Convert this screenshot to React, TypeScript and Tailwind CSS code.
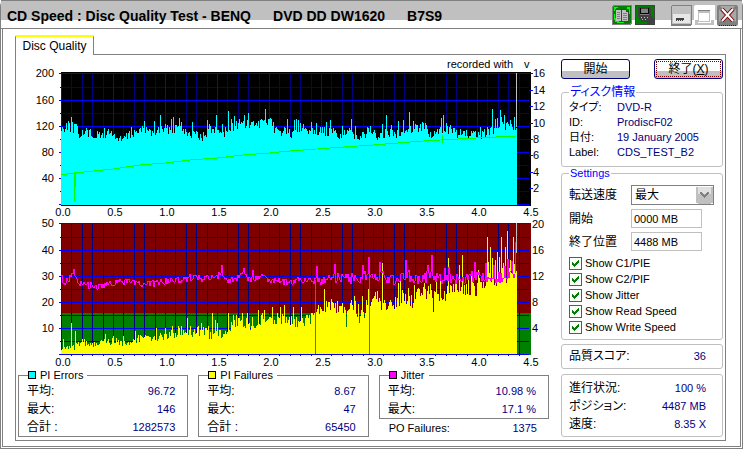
import type { ReactNode } from 'react';

type Point = [number, number];

const PLOT_LEFT = 61;
const PLOT_RIGHT = 531;
const DATA_END = 517;
const HALF_GB = 52;

// outline of the PI error bars
const pieBase: Point[] = [
  [61, 130], [66, 126], [76, 129], [79, 134], [90, 134], [100, 136], [112, 133], [119, 141], [124, 138],
  [135, 132], [145, 130], [152, 133], [160, 129], [172, 129], [180, 126], [188, 133], [201, 137], [210, 130],
  [222, 133], [232, 127], [240, 126], [262, 124], [270, 123], [277, 132], [285, 130], [292, 136], [300, 127],
  [318, 131], [334, 133], [340, 135], [350, 133], [362, 136], [370, 129], [377, 138], [386, 132], [394, 134],
  [402, 130], [424, 126], [431, 137], [444, 128], [455, 133], [477, 136], [490, 131], [500, 125], [517, 126],
];
const piePeaks: Point[] = [
  [66, 123], [68, 121], [71, 117], [72, 122], [75, 124], [86, 128], [104, 128], [108, 129], [131, 127], [144, 121],
  [146, 127], [154, 121], [160, 115], [167, 125], [171, 119], [173, 117], [179, 118], [181, 122], [192, 122],
  [202, 141], [207, 120], [209, 124], [216, 115], [222, 124], [228, 111], [231, 119], [234, 116], [236, 121],
  [239, 119], [244, 115], [248, 113], [253, 121], [261, 119], [265, 109], [269, 119], [271, 119], [287, 119],
  [294, 120], [296, 119], [298, 120], [300, 123], [311, 122], [316, 123], [326, 122], [330, 120], [338, 138],
  [342, 126], [351, 119], [355, 126], [370, 126], [382, 124], [386, 115], [391, 125], [398, 121], [403, 120],
  [409, 112], [413, 121], [416, 125], [422, 122], [441, 118], [443, 115], [446, 123], [450, 125], [476, 138],
  [480, 127], [488, 129], [492, 109], [495, 119], [497, 118], [500, 110], [501, 117], [504, 115], [510, 120],
  [514, 117],
];

// outline of the PI failure bars
const pifBase: Point[] = [
  [61, 347], [75, 347], [82, 342], [90, 346], [100, 343], [112, 341], [125, 343], [138, 338], [155, 338],
  [162, 337], [175, 333], [185, 329], [192, 333], [203, 330], [210, 335], [225, 334], [232, 324], [240, 321],
  [252, 325], [262, 319], [275, 320], [285, 318], [296, 323], [312, 318], [320, 307], [330, 304], [342, 309],
  [354, 306], [362, 315], [368, 302], [380, 303], [392, 308], [402, 296], [412, 301], [422, 293], [433, 295],
  [443, 293], [452, 290], [466, 287], [476, 287], [486, 283], [498, 278], [508, 275], [517, 270],
];
const pifPeaks: Point[] = [
  [63, 339], [71, 323], [75, 331], [84, 339], [105, 334], [113, 336], [123, 336], [135, 331], [140, 335],
  [156, 328], [165, 328], [172, 326], [178, 326], [181, 326], [187, 318], [190, 326], [198, 326], [201, 323],
  [208, 326], [212, 313], [215, 320], [217, 323], [228, 313], [233, 315], [236, 315], [242, 313], [247, 313],
  [252, 317], [258, 310], [262, 313], [264, 310], [269, 317], [272, 307], [280, 307], [284, 305], [293, 307],
  [295, 327], [297, 327], [301, 307], [306, 315], [318, 305], [324, 289], [328, 302], [337, 301], [342, 303],
  [346, 327], [352, 305], [354, 296], [359, 323], [362, 296], [368, 289], [375, 292], [377, 291], [382, 263],
  [389, 302], [398, 283], [400, 281], [408, 288], [414, 285], [418, 288], [424, 283], [430, 284], [433, 312],
  [436, 278], [440, 277], [448, 258], [455, 283], [459, 265], [462, 255], [471, 275], [478, 270], [487, 237],
  [488, 262], [490, 247], [492, 258], [495, 260], [497, 252], [499, 257], [501, 237], [503, 263], [505, 247],
  [507, 231], [510, 260], [513, 237], [515, 255],
];

const jitterBase: Point[] = [
  [61, 273], [64, 284], [70, 278], [73, 272], [77, 281], [90, 286], [103, 285], [115, 282], [125, 282],
  [140, 284], [150, 284], [162, 282], [172, 280], [185, 280], [194, 276], [203, 280], [212, 276], [221, 275],
  [228, 280], [234, 280], [242, 275], [252, 280], [260, 276], [270, 280], [286, 282], [300, 279], [316, 281],
  [332, 276], [345, 280], [362, 277], [370, 276], [382, 276], [395, 279], [408, 275], [420, 281], [430, 275],
  [440, 278], [462, 279], [478, 275], [495, 278], [508, 275], [515, 275],
];
const jitterPeaks: Point[] = [
  [74, 269], [222, 265], [244, 268], [253, 270], [317, 266], [335, 264], [363, 265], [369, 257], [380, 262],
  [406, 260], [428, 265], [432, 255], [445, 268], [449, 267], [475, 262], [486, 263], [494, 265], [505, 266],
  [508, 259], [512, 261], [516, 242],
];

const readSpeed =
  '61,175 74,173 113,169 140,165 165,163 190,160 217,158 243,155 269,153 290,151 330,148 373,145 423,141 476,138 516,136';

function interpolate(points: Point[], x: number) {
  const next = points.findIndex(([px]) => px >= x);
  if (next < 1) return next === 0 ? points[0][1] : points[points.length - 1][1];
  const [x0, y0] = points[next - 1];
  const [x1, y1] = points[next];
  return y0 + ((y1 - y0) * (x - x0)) / (x1 - x0);
}

function samples(base: Point[], peaks: Point[], spread: (x: number) => number, seed: number): Point[] {
  const fixed = new Map(peaks);
  let state = seed;
  const result: Point[] = [];
  for (let x = PLOT_LEFT; x < DATA_END; x++) {
    state = (state * 1103515245 + 12345) % 2147483648;
    const noise = (state / 2147483648 - 0.5) * spread(x);
    result.push([x, fixed.get(x) ?? Math.round(interpolate(base, x) + noise)]);
  }
  return result;
}

function bars(points: Point[], bottom: number) {
  return points.map(([x, y]) => `M${x} ${y}h1V${bottom}h-1z`).join('');
}

const pieBars = bars(samples(pieBase, piePeaks, () => 10, 7), 205);
const pifBars = bars(samples(pifBase, pifPeaks, (x) => 6 + (x - 61) / 34, 31), 354);
const jitterLine = samples(jitterBase, jitterPeaks, (x) => (x > 320 ? 12 : 7), 99)
  .map(([x, y]) => `${x},${y}`)
  .join(' ');

const minorColumns = Array.from({ length: 46 }, (_, i) => i).filter((i) => i % 5 !== 0);
const majorColumns = Array.from({ length: 10 }, (_, i) => i);

function Grid({ top, bottom, major, minor }: { top: number; bottom: number; major: number[]; minor: number[] }) {
  return (
    <g>
      {minorColumns.map((i) => (
        <rect key={i} x={Math.round(PLOT_LEFT + i * 10.4)} y={top} width="1" height={bottom - top} fill="#000080" />
      ))}
      {minor.map((y) => (
        <rect key={y} x="60" y={y} width="469" height="1" fill="#000080" />
      ))}
      {majorColumns.slice(0, 9).map((i) => (
        <rect key={i} x={PLOT_LEFT + i * HALF_GB} y={top} width="1" height={bottom - top} fill="#0000ff" />
      ))}
      {major.map((y) => (
        <rect key={y} x="59" y={y} width="470" height="1" fill="#0000ff" />
      ))}
    </g>
  );
}

function XLabels({ y }: { y: number }) {
  return (
    <g textAnchor="middle">
      {majorColumns.map((i) => (
        <text key={i} x={63 + i * HALF_GB} y={y}>
          {(i / 2).toFixed(1)}
        </text>
      ))}
    </g>
  );
}

function YLabels({ x, rows, anchor }: { x: number; rows: [string, number][]; anchor: 'start' | 'end' }) {
  return (
    <g textAnchor={anchor}>
      {rows.map(([label, y]) => (
        <text key={label} x={x} y={y + 4}>
          {label}
        </text>
      ))}
    </g>
  );
}

function Charts() {
  const errorRows = [73, 100, 126, 152, 178, 204];
  const failureRows = [223, 250, 276, 302, 328, 354];
  const speedRows: [string, number][] = [
    ['16', 73], ['14', 90], ['12', 106], ['10', 123], ['8', 139], ['6', 155], ['4', 172], ['2', 188],
  ];
  return (
    <svg viewBox="18 55 531 313" className="block w-full overflow-visible text-[11px]" shapeRendering="crispEdges">
      <text x="447" y="68">recorded with</text>
      <text x="524" y="68">v</text>

      <rect x={PLOT_LEFT} y="72" width={PLOT_RIGHT - PLOT_LEFT} height="134" fill="#000" />
      <Grid top={73} bottom={205} major={errorRows} minor={[87, 113, 139, 165, 191]} />
      <path d={pieBars} fill="#00ffff" />
      <rect x="516" y="73" width="1" height="54" fill="#c0c0c0" />
      <polyline points={readSpeed} fill="none" stroke="#00ff00" strokeWidth="1" />
      <path d="M74 173h1v28h-1zM75 173h1v14h-1zM442 135h1v8h-1zM489 135h1v4h-1z" fill="#00ff00" />
      {speedRows.map(([label, y]) => (
        <rect key={label} x="529" y={y} width="4" height="1" fill="#0000ff" />
      ))}
      <YLabels x={54} anchor="end" rows={[['200', 73], ['160', 100], ['120', 126], ['80', 152], ['40', 178]]} />
      <YLabels x={533} anchor="start" rows={speedRows} />
      <XLabels y={216} />

      <rect x={PLOT_LEFT} y="223" width={PLOT_RIGHT - PLOT_LEFT} height="90" fill="#800000" />
      <rect x={PLOT_LEFT} y="313" width={PLOT_RIGHT - PLOT_LEFT} height="42" fill="#008000" />
      <Grid top={223} bottom={355} major={failureRows} minor={[237, 263, 289, 315, 341]} />
      <path d={pifBars} fill="#ffff00" />
      <path d="M315 280h1v74h-1zM369 257h1v97h-1z" fill="#ff00ff" />
      <polyline points={jitterLine} fill="none" stroke="#ff00ff" strokeWidth="1" />
      <rect x="516" y="223" width="1" height="30" fill="#c0c0c0" />
      {minorColumns.slice(0, 36).map((i) => (
        <rect key={i} x={Math.round(PLOT_LEFT + i * 10.4)} y="355" width="1" height="1" fill="#000" />
      ))}
      <YLabels x={54} anchor="end" rows={[['50', 223], ['40', 250], ['30', 276], ['20', 302], ['10', 328]]} />
      <YLabels x={532} anchor="start" rows={[['20', 224], ['16', 250], ['12', 276], ['8', 302], ['4', 328]]} />
      <XLabels y={366} />
    </svg>
  );
}

function StatBox({ title, swatch, children }: { title: string; swatch: ReactNode; children: ReactNode }) {
  return (
    <fieldset className="min-w-0 border border-[#808080] pr-3 pl-2">
      <legend className="ml-px flex items-center gap-1 pr-1 leading-[14px]">
        {swatch}
        {title}
      </legend>
      {children}
    </fieldset>
  );
}

function StatRow({ label, value }: { label: string; value: string }) {
  return (
    <div className="flex h-[18px] items-center justify-between leading-[18px]">
      <span className="text-[12px]">{label}</span>
      <span className="text-[#000080]">{value}</span>
    </div>
  );
}

function InfoRow({ label, value }: { label: string; value: string }) {
  return (
    <div className="flex h-[15px] leading-[15px]">
      <span className="w-12">{label}</span>
      <span className="text-[#000080]">{value}</span>
    </div>
  );
}

function CheckRow({ label }: { label: string }) {
  return (
    <label className="flex h-4 items-center gap-[3px]">
      <span className="grid size-[13px] shrink-0">
        <input
          type="checkbox"
          defaultChecked
          className="peer col-start-1 row-start-1 size-[13px] appearance-none border border-[#008080] bg-white"
        />
        <svg
          viewBox="0 0 13 13"
          className="pointer-events-none invisible col-start-1 row-start-1 peer-checked:visible"
          shapeRendering="crispEdges"
        >
          <path
            d="M3 5h1v3h-1zM4 6h1v3h-1zM5 7h1v3h-1zM6 6h1v3h-1zM7 5h1v3h-1zM8 4h1v3h-1zM9 3h1v3h-1z"
            fill="#008000"
          />
        </svg>
      </span>
      {label}
    </label>
  );
}

function TitleBar() {
  return (
    <header className="flex h-[29px] items-start justify-between border-b border-[#808080] bg-[linear-gradient(#808080_0_1px,#c0c0c0_1px_20px,#fff_20px)] pr-1 pl-[6px]">
      <h1 className="flex gap-[22px] pt-[6px] text-[14px] leading-5 font-bold whitespace-nowrap">
        <span>CD Speed : Disc Quality Test - BENQ</span>
        <span>DVD DD DW1620</span>
        <span>B7S9</span>
      </h1>
      <div className="flex pt-[5px]">
        <button type="button" aria-label="Copy" className="mr-[3px] size-5">
          <svg viewBox="0 0 20 20" shapeRendering="crispEdges">
            <rect width="20" height="20" rx="2" fill="#808080" />
            <rect x="1" y="1" width="18" height="18" rx="2" fill="#008000" />
            <path d="M2 2h4v1h-2v1h-1v2h-1zM2 9h1v4h1v2h2v1h1v1h5v1h-7v-1h-2v-2h-1zM15 2h3v7h-1v-5h-2z" fill="#00ff00" />
            <path d="M4 5h6v11h-6z" fill="#c0c0c0" />
            <path d="M9 4h5v2h3v11h-8z" fill="#404040" />
            <path d="M10 5h4v2h2v9h-6z" fill="#c0c0c0" />
            <path d="M5 7h3v1h-3zM5 9h3v1h-3zM5 11h3v1h-3zM5 13h3v1h-3zM11 8h4v1h-4zM11 10h4v1h-4zM11 12h4v1h-4zM11 14h4v1h-4z" fill="#808080" />
          </svg>
        </button>
        <button type="button" aria-label="Save" className="mr-4 size-5">
          <svg viewBox="0 0 20 20" shapeRendering="crispEdges">
            <rect width="20" height="20" rx="1" fill="#404040" />
            <path d="M1 1h18v18h-18z" fill="#008000" />
            <path d="M3 2h13v9l3 3v3l-3 2h-4v-2h-6v-2h-2v-3h-1z" fill="#404040" />
            <path d="M5 4h9v6h-9z" fill="#808080" />
            <path d="M5 3h1v5h7v-5h1v6h-9z" fill="#000" />
            <path d="M6 12h1v1h-1zM9 12h1v1h-1zM12 12h1v1h-1zM7 14h1v1h-1zM10 14h1v1h-1z" fill="#c0c0c0" />
          </svg>
        </button>
        <button type="button" aria-label="Minimize" className="mr-[2px] size-[21px]">
          <svg viewBox="0 0 21 21" shapeRendering="crispEdges">
            <rect width="21" height="21" rx="2" fill="#808080" />
            <path d="M1 1h19v18h-19z" fill="#c0c0c0" />
            <path d="M2 9h17v9h-17z" fill="#e8e8e8" />
            <path d="M5 13h8v1h-8zM5 15h1v1h-1zM7 15h1v1h-1zM9 15h1v1h-1zM11 15h1v1h-1zM5 14h8v1h-8z" fill="#404040" />
          </svg>
        </button>
        <button type="button" aria-label="Maximize" className="mr-[2px] size-[21px]" disabled>
          <svg viewBox="0 0 21 21" shapeRendering="crispEdges">
            <rect width="21" height="21" rx="2" fill="#fff" />
            <path d="M1 15h3v3h13v-3h3v5h-19z" fill="#c0c0c0" />
            <path d="M4 5h12v12h-12z" fill="#c0c0c0" />
            <path d="M5 8h10v8h-10z" fill="#fff" />
            <path d="M4 5h12v1h-12z" fill="#808080" />
          </svg>
        </button>
        <button type="button" aria-label="Close" className="size-[21px]">
          <svg viewBox="0 0 21 21">
            <rect width="21" height="21" rx="2" fill="#808080" />
            <path d="M3 1h15l-7.500 8zM2 4l6 7-6 6zM19 4l-6 7 6 6z" fill="#a8a8a8" />
            <path d="M5 4l11 12M16 4L5 16" stroke="#800000" strokeWidth="4" />
            <path d="M5 4l11 12M16 4L5 16" stroke="#fff" strokeWidth="2" />
            <path d="M2 20.500h17" stroke="#800000" strokeDasharray="1 1" />
          </svg>
        </button>
      </div>
    </header>
  );
}

const groupBox = 'min-w-0 rounded-[3px] border border-[#c0c0c0]';
const pushButton =
  'h-5 w-[69px] rounded-[3px] border border-[#000080] bg-[linear-gradient(#fff_0_11px,#c0c0c0_11px)] text-[12px]';

function SidePanel() {
  return (
    <aside className="w-[162px] shrink-0 pt-1">
      <div className="flex justify-between">
        <button type="button" className={`${pushButton} leading-[18px]`}>
          開始
        </button>
        <button type="button" className={`${pushButton} p-px`}>
          <span className="block h-4 border border-dotted border-[#800000] leading-[14px]">
            終了(<u>X</u>)
          </span>
        </button>
      </div>

      <fieldset className={`${groupBox} mt-[7px] h-[81px] px-[7px]`}>
        <legend className="px-px text-[12px] leading-3 text-[#0000ff]">ディスク情報</legend>
        <div className="pt-[2px]">
          <InfoRow label="タイプ:" value="DVD-R" />
          <InfoRow label="ID:" value="ProdiscF02" />
          <InfoRow label="日付:" value="19 January 2005" />
          <InfoRow label="Label:" value="CDS_TEST_B2" />
        </div>
      </fieldset>

      <fieldset className={`${groupBox} h-[173px] px-[7px]`}>
        <legend className="px-px leading-3 text-[#0000ff]">Settings</legend>
        <div className="grid grid-cols-[62px_1fr] items-center gap-y-1 pt-[6px]">
          <label htmlFor="speed" className="text-[12px]">転送速度</label>
          <div className="grid w-[83px]">
            <select
              id="speed"
              className="col-start-1 row-start-1 h-5 w-full appearance-none border border-[#808080] bg-white pl-[3px] text-[12px] leading-[18px]"
            >
              <option>最大</option>
            </select>
            <svg
              viewBox="0 0 18 18"
              className="pointer-events-none col-start-1 row-start-1 size-[18px] self-center justify-self-end pr-px"
              shapeRendering="crispEdges"
            >
              <rect width="18" height="18" rx="2" fill="#c0c0c0" />
              <path d="M2 1h14v7h-14z" fill="#e0e0e0" />
              <path d="M4 6h2v1h1v1h1v1h2v-1h1v-1h1v-1h2v2h-1v1h-1v1h-1v1h-1v1h-2v-1h-1v-1h-1v-1h-1v-1h-1z" fill="#808080" />
            </svg>
          </div>
          <label htmlFor="start" className="text-[12px]">開始</label>
          <input id="start" defaultValue="0000 MB" className="h-[19px] w-[71px] border border-[#c0c0c0] px-[2px]" />
          <label htmlFor="end" className="text-[12px]">終了位置</label>
          <input id="end" defaultValue="4488 MB" className="h-[19px] w-[71px] border border-[#c0c0c0] px-[2px]" />
        </div>
        <div className="flex flex-col pt-1">
          <CheckRow label="Show C1/PIE" />
          <CheckRow label="Show C2/PIF" />
          <CheckRow label="Show Jitter" />
          <CheckRow label="Show Read Speed" />
          <CheckRow label="Show Write Speed" />
        </div>
      </fieldset>

      <div className={`${groupBox} mt-1 h-[25px] pt-[2px] pr-4 pl-[7px]`}>
        <StatRow label="品質スコア:" value="36" />
      </div>
      <div className={`${groupBox} mt-[5px] h-[63px] pt-1 pr-4 pl-[7px]`}>
        <StatRow label="進行状況:" value="100 %" />
        <StatRow label="ポジション:" value="4487 MB" />
        <StatRow label="速度:" value="8.35 X" />
      </div>
    </aside>
  );
}

function Swatch({ className }: { className: string }) {
  return <span className={`size-2 border border-black ${className}`} />;
}

export default function App() {
  return (
    <div className="rounded-t-md border-x border-b border-[#808080] bg-white font-['Liberation_Sans','Noto_Sans_CJK_JP',sans-serif] text-[11px] text-black [font-feature-settings:'palt']">
      <TitleBar />
      <main className="mx-px mb-px border-x border-b border-[#808080] pt-[6px] pr-[14px] pb-[5px] pl-[12px]">
        <div role="tablist" className="flex">
          <button
            type="button"
            role="tab"
            aria-selected="true"
            className="relative z-10 -mb-px h-5 w-[79px] rounded-t-[2px] border-x border-t-2 border-x-[#808080] border-t-[#ffff00] bg-white text-[12px] leading-4"
          >
            Disc Quality
          </button>
        </div>
        <div className="flex gap-3 border border-[#808080] pr-[2px] pb-[3px] pl-[2px]">
          <div className="min-w-0 flex-1">
            <Charts />
            <div className="grid grid-cols-3 gap-[10px]">
              <StatBox title="PI Errors" swatch={<Swatch className="bg-[#00ffff]" />}>
                <StatRow label="平均:" value="96.72" />
                <StatRow label="最大:" value="146" />
                <StatRow label="合計 :" value="1282573" />
              </StatBox>
              <StatBox title="PI Failures" swatch={<Swatch className="bg-[#ffff00]" />}>
                <StatRow label="平均:" value="8.67" />
                <StatRow label="最大:" value="47" />
                <StatRow label="合計 :" value="65450" />
              </StatBox>
              <div>
                <StatBox title="Jitter" swatch={<Swatch className="bg-[#ff00ff]" />}>
                  <StatRow label="平均:" value="10.98 %" />
                  <StatRow label="最大:" value="17.1 %" />
                </StatBox>
                <div className="flex h-[18px] items-center justify-between pr-3 pl-[10px]">
                  <span>PO Failures:</span>
                  <span className="text-[#000080]">1375</span>
                </div>
              </div>
            </div>
          </div>
          <SidePanel />
        </div>
      </main>
    </div>
  );
}
